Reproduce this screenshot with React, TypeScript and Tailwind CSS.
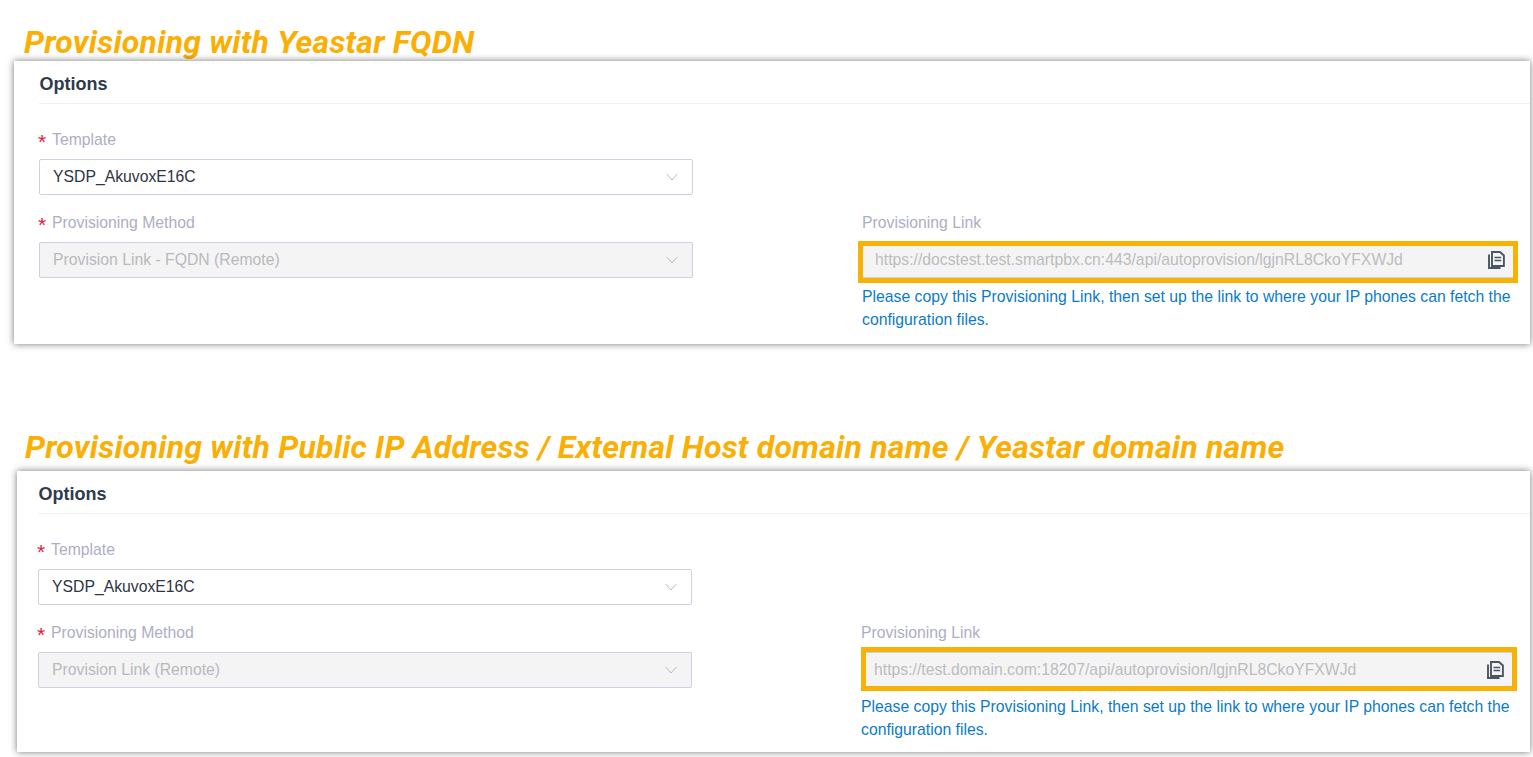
import React from 'react';

const sans = { fontFamily: '"Liberation Sans", Arial, sans-serif' };

function Chevron() {
  return (
    <svg width="12" height="8" viewBox="0 0 12 8" fill="none" className="shrink-0">
      <path d="M0.5 0.8 L6 7 L11.5 0.8" stroke="#b9bcc6" strokeWidth="1" />
    </svg>
  );
}

function CopyIcon() {
  return (
    <svg width="17" height="18" viewBox="0 0 17 18" fill="none" className="shrink-0">
      <path d="M1 3.5 V17 H12.5" stroke="#4b5563" strokeWidth="1.9" fill="none" />
      <path d="M4 1 H12 L15.9 4.5 V15 H4 Z" stroke="#4b5563" strokeWidth="1.9" fill="#f4f4f5" />
      <path d="M6.5 6.5 H13.2 M6.5 9.5 H13.2" stroke="#4b5563" strokeWidth="1.6" />
    </svg>
  );
}

function Label({ text, required }: { text: string; required?: boolean }) {
  return (
    <div className="h-[20px] flex items-center text-[15.75px] leading-[20px] text-[#aeaec3]">
      {required && <span className="w-[13px] h-[20px] -ml-[1px] mr-[1px] pt-[1px] text-[21px] leading-[21px] text-[#e6193c]">*</span>}
      {text}
    </div>
  );
}

function Select({ value, disabled }: { value: string; disabled?: boolean }) {
  return (
    <div
      className={`w-[654px] h-[36px] rounded-[2px] border border-[#d0d0e0] pl-[13px] pr-[14px] flex items-center justify-between text-[15.75px] ${
        disabled ? 'bg-[#f4f4f5] text-[#b9b9bd]' : 'bg-white text-[#2f3542]'
      }`}
    >
      <span>{value}</span>
      <Chevron />
    </div>
  );
}

interface CardProps {
  method: string;
  link: string;
  highlightClass: string;
  className: string;
}

function OptionsCard({ method, link, highlightClass, className }: CardProps) {
  return (
    <div className={`bg-white shadow-[0_0_7px_rgba(0,0,0,0.55)] ${className}`} style={sans}>
      <div className="h-[43px] border-b border-[#f2f2f5] flex items-center text-[18px] font-bold text-[#303a4b]">
        <span className="pt-[4px] pl-[0.5px]">Options</span>
      </div>
      <div className="pt-[26px]">
        <Label text="Template" required />
        <div className="mt-[9px]">
          <Select value="YSDP_AkuvoxE16C" />
        </div>
        <div className="mt-[18px] flex gap-[169px]">
          <div>
            <Label text="Provisioning Method" required />
            <div className="mt-[9px]">
              <Select value={method} disabled />
            </div>
          </div>
          <div className="w-[652px]">
            <Label text="Provisioning Link" />
            <div className="relative mt-[9px] h-[36px] rounded-[2px] border border-[#d0d0e0] bg-[#f4f4f5] pl-[12px] pr-[8px] flex items-center justify-between text-[15.75px] text-[#bcbcbf]">
              <span>{link}</span>
              <CopyIcon />
              <div className={`absolute border-[#f5b308] ${highlightClass}`} />
            </div>
            <p className="mt-[7px] text-[15.75px] leading-[23px] text-[#0b7bc9]">
              Please copy this Provisioning Link, then set up the link to where your IP phones can fetch the configuration files.
            </p>
          </div>
        </div>
      </div>
    </div>
  );
}

export default function App() {
  return (
    <div className="w-[1533px] h-[757px] overflow-hidden bg-white flex flex-col">
      <h2 className="ml-[24px] mt-[23px] h-[38px] text-[32px] leading-[38px] font-bold italic text-[#fbae04] tracking-[0.225px]" style={{ fontFamily: 'Roboto, sans-serif' }}>
        Provisioning with Yeastar FQDN
      </h2>
      <OptionsCard
        className="ml-[14px] mr-[3px] h-[283px] pl-[25px]"
        method="Provision Link - FQDN (Remote)"
        link="https://docstest.test.smartpbx.cn:443/api/autoprovision/lgjnRL8CkoYFXWJd"
        highlightClass="border-[5px] -left-[5px] -right-[5px] -top-[2px] -bottom-[6px]"
      />
      <h2 className="ml-[25px] mt-[84px] h-[38px] text-[32px] leading-[38px] font-bold italic text-[#fbae04] tracking-[0.225px]" style={{ fontFamily: 'Roboto, sans-serif' }}>
        Provisioning with Public IP Address / External Host domain name / Yeastar domain name
      </h2>
      <OptionsCard
        className="ml-[17px] mr-[3px] mt-[5px] h-[281px] pl-[21px]"
        method="Provision Link (Remote)"
        link="https://test.domain.com:18207/api/autoprovision/lgjnRL8CkoYFXWJd"
        highlightClass="border-[5px] -left-[1px] -right-[5px] -top-[6px] -bottom-[4px]"
      />
    </div>
  );
}
